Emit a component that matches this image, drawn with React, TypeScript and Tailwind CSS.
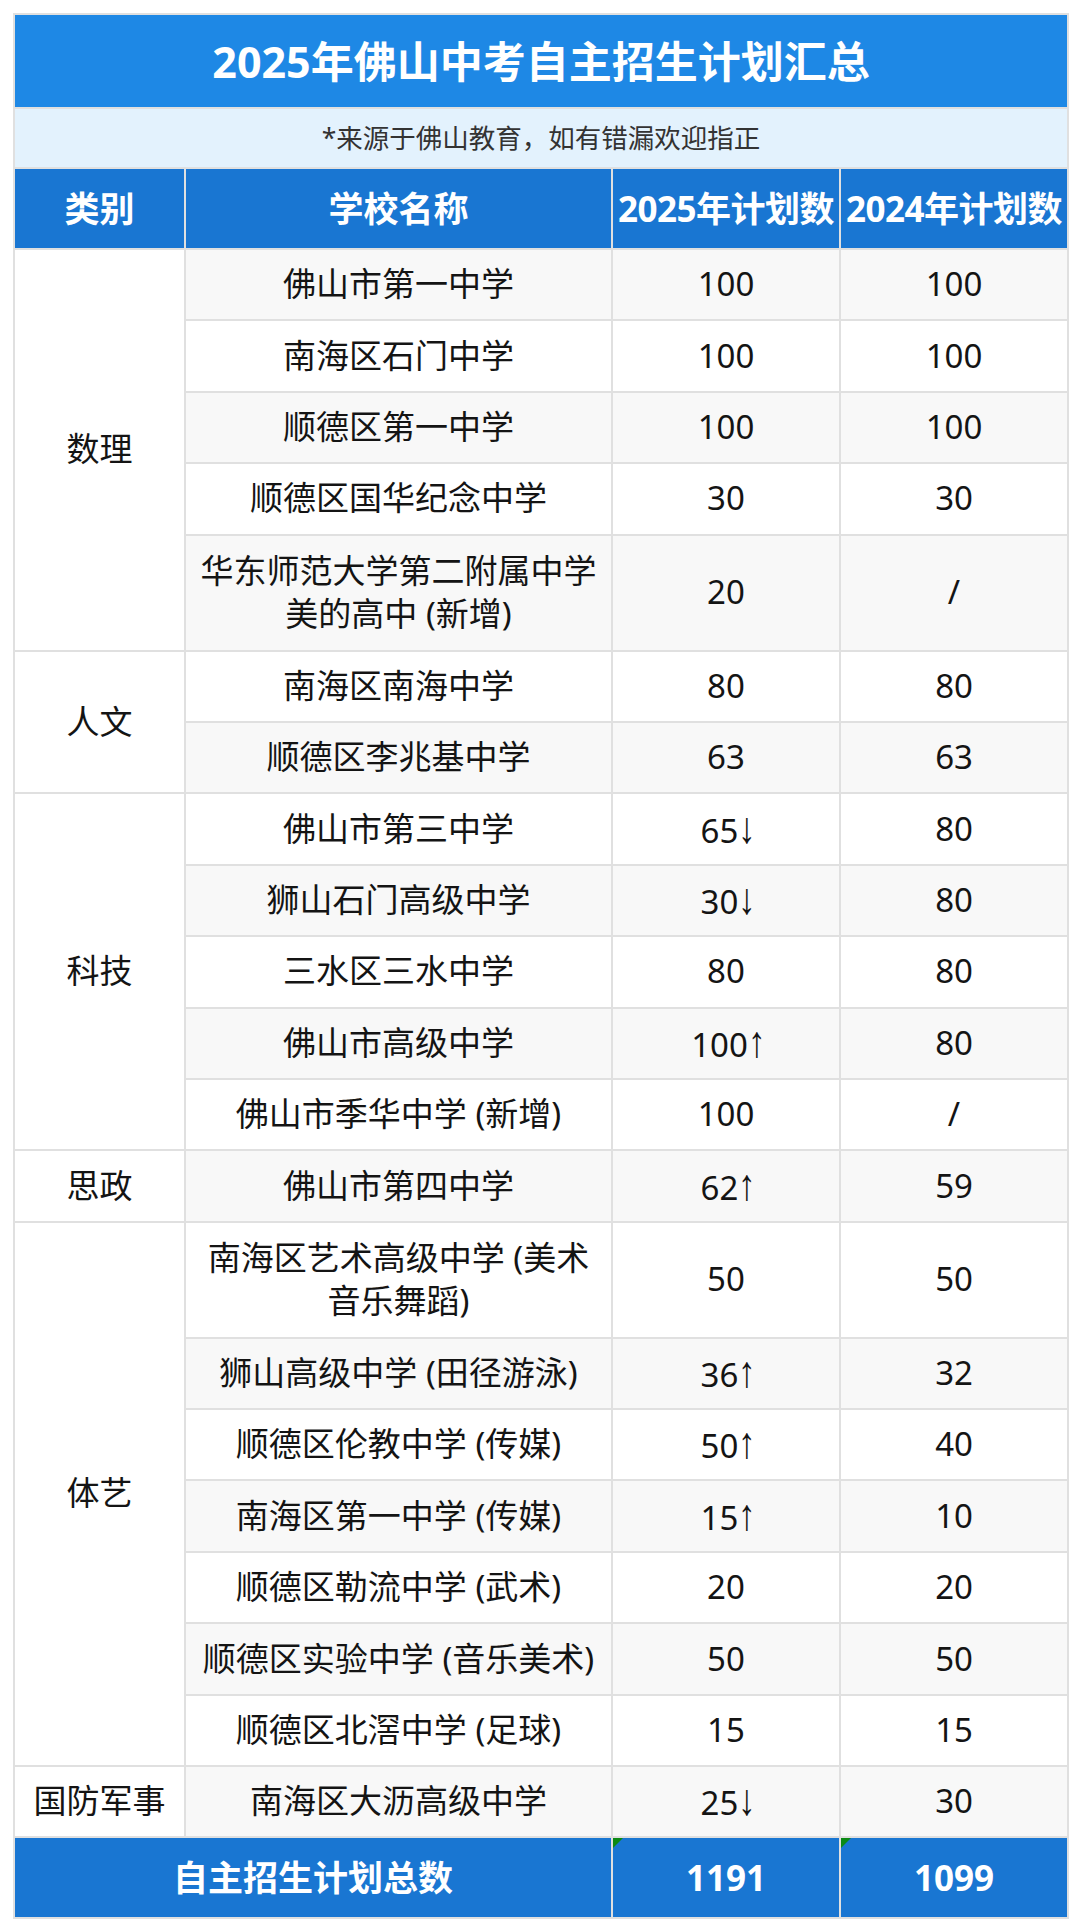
import React from "react";

type Row = { school: React.ReactNode; a: string; b: string; tall?: boolean };
type Group = { cat: string; rows: Row[] };

const groups: Group[] = [
  {
    cat: "数理",
    rows: [
      { school: "佛山市第一中学", a: "100", b: "100" },
      { school: "南海区石门中学", a: "100", b: "100" },
      { school: "顺德区第一中学", a: "100", b: "100" },
      { school: "顺德区国华纪念中学", a: "30", b: "30" },
      {
        school: (
          <>
            华东师范大学第二附属中学
            <br />
            美的高中 (新增)
          </>
        ),
        a: "20",
        b: "/",
        tall: true,
      },
    ],
  },
  {
    cat: "人文",
    rows: [
      { school: "南海区南海中学", a: "80", b: "80" },
      { school: "顺德区李兆基中学", a: "63", b: "63" },
    ],
  },
  {
    cat: "科技",
    rows: [
      { school: "佛山市第三中学", a: "65↓", b: "80" },
      { school: "狮山石门高级中学", a: "30↓", b: "80" },
      { school: "三水区三水中学", a: "80", b: "80" },
      { school: "佛山市高级中学", a: "100↑", b: "80" },
      { school: "佛山市季华中学 (新增)", a: "100", b: "/" },
    ],
  },
  {
    cat: "思政",
    rows: [{ school: "佛山市第四中学", a: "62↑", b: "59" }],
  },
  {
    cat: "体艺",
    rows: [
      {
        school: (
          <>
            南海区艺术高级中学 (美术
            <br />
            音乐舞蹈)
          </>
        ),
        a: "50",
        b: "50",
        tall: true,
      },
      { school: "狮山高级中学 (田径游泳)", a: "36↑", b: "32" },
      { school: "顺德区伦教中学 (传媒)", a: "50↑", b: "40" },
      { school: "南海区第一中学 (传媒)", a: "15↑", b: "10" },
      { school: "顺德区勒流中学 (武术)", a: "20", b: "20" },
      { school: "顺德区实验中学 (音乐美术)", a: "50", b: "50" },
      { school: "顺德区北滘中学 (足球)", a: "15", b: "15" },
    ],
  },
  {
    cat: "国防军事",
    rows: [{ school: "南海区大沥高级中学", a: "25↓", b: "30" }],
  },
];

function Num({ v }: { v: string }) {
  const m = v.match(/^(\d+)([↑↓])$/);
  if (!m) return <>{v}</>;
  return (
    <>
      {m[1]}
      <span className="inline-block w-[13px] text-left align-baseline text-[44px] leading-none font-['Liberation_Sans',sans-serif] [transform:scaleX(0.8)] origin-left">
        {m[2]}
      </span>
    </>
  );
}

export default function App() {
  let idx = 0;
  const cell = "border-2 border-[#e0e0e0] text-center align-middle p-0";
  return (
    <div className="min-h-[1929px] w-[1080px] bg-white pt-[13px] pl-[13px] font-['Noto_Sans','Noto_Sans_CJK_SC',sans-serif] text-[#141414]">
      <table className="w-[1054px] table-fixed border-collapse">
        <colgroup>
          <col className="w-[171px]" />
          <col className="w-[427px]" />
          <col className="w-[228px]" />
          <col className="w-[228px]" />
        </colgroup>
        <tbody>
          <tr>
            <td
              colSpan={4}
              className="h-[94px] border-2 border-[#e0e0e0] bg-[#1e88e5] p-0 text-center align-middle text-[43px] font-bold leading-none text-white"
            >
              2025年佛山中考自主招生计划汇总
            </td>
          </tr>
          <tr>
            <td
              colSpan={4}
              className="h-[60px] border-2 border-[#e0e0e0] bg-[#e3f2fd] p-0 text-center align-middle text-[26.5px] leading-none text-[#333]"
            >
              *来源于佛山教育，如有错漏欢迎指正
            </td>
          </tr>
          <tr className="bg-[#1976d2] text-[35px] font-bold leading-none text-white">
            <td className="h-[81px] border-2 border-[#e0e0e0] p-0 text-center align-middle">类别</td>
            <td className="border-2 border-[#e0e0e0] p-0 text-center align-middle">学校名称</td>
            <td className="whitespace-nowrap border-2 border-[#e0e0e0] p-0 text-center align-middle tracking-[-0.5px]">
              2025年计划数
            </td>
            <td className="whitespace-nowrap border-2 border-[#e0e0e0] p-0 text-center align-middle tracking-[-0.5px]">
              2024年计划数
            </td>
          </tr>
          {groups.map((g) =>
            g.rows.map((r, i) => {
              const stripe = idx % 2 === 0 ? "bg-[#f8f8f8]" : "bg-white";
              idx++;
              return (
                <tr key={g.cat + i} className="text-[33px] leading-[1.3]">
                  {i === 0 && (
                    <td rowSpan={g.rows.length} className={`${cell} bg-white`}>
                      {g.cat}
                    </td>
                  )}
                  <td className={`${cell} ${stripe} ${r.tall ? "h-[116px]" : "h-[71.4px]"}`}>{r.school}</td>
                  <td className={`${cell} ${stripe}`}>
                    <Num v={r.a} />
                  </td>
                  <td className={`${cell} ${stripe}`}>{r.b}</td>
                </tr>
              );
            })
          )}
          <tr className="bg-[#1976d2] text-[35px] font-bold leading-none text-white">
            <td colSpan={2} className="h-[81px] border-2 border-[#e0e0e0] p-0 text-center align-middle">
              自主招生计划总数
            </td>
            <td className="relative border-2 border-[#e0e0e0] p-0 text-center align-middle">
              <span className="absolute left-0 top-0 h-0 w-0 border-r-[10px] border-t-[10px] border-r-transparent border-t-[#0b8a14]"></span>
              1191
            </td>
            <td className="relative border-2 border-[#e0e0e0] p-0 text-center align-middle">
              <span className="absolute left-0 top-0 h-0 w-0 border-r-[10px] border-t-[10px] border-r-transparent border-t-[#0b8a14]"></span>
              1099
            </td>
          </tr>
        </tbody>
      </table>
    </div>
  );
}
